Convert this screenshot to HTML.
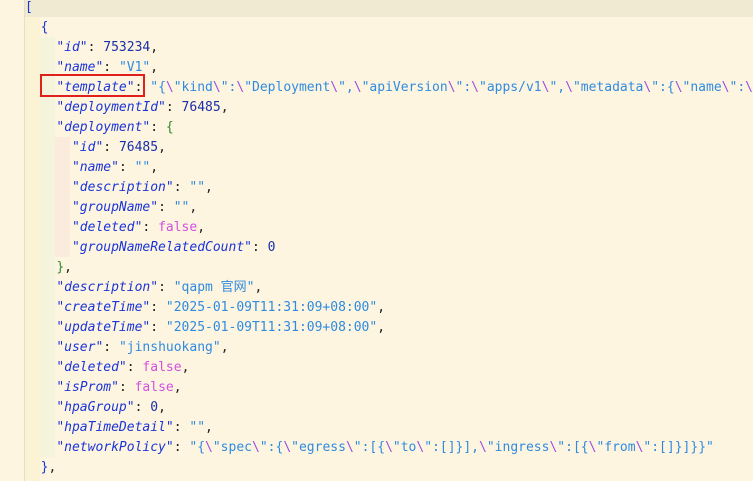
<!DOCTYPE html>
<html><head><meta charset="utf-8"><style>
html,body{margin:0;padding:0;width:753px;height:481px;overflow:hidden;background:#fdf5e0;}
.hl{position:absolute;left:24px;top:0;width:729px;height:17px;background:#f1ead2;}
.vl{position:absolute;left:24px;top:0;width:1px;height:481px;background:#e6dfc8;}
.g1{position:absolute;left:25px;top:17px;width:15px;height:464px;background:#fbf3d4;}
.g2{position:absolute;left:40px;top:37px;width:15px;height:420px;background:#f4f3db;}
.g3{position:absolute;left:55px;top:137px;width:15px;height:120px;background:#fbebdc;}
pre{position:absolute;left:25px;top:-2px;margin:0;font-family:"DejaVu Sans Mono","Liberation Mono","Noto Sans CJK SC",monospace;font-size:13px;line-height:20px;color:#222;white-space:pre;}
.k{color:#1c35d8;font-style:italic}
.p{color:#1c35d8}
.n{color:#1a2fa8}
.s{color:#2f8be0}
.e{color:#9a4fe0}
.f{color:#d34fe0}
.b{color:#2e8a2e}
.box{position:absolute;left:40px;top:74px;width:105px;height:23px;border:2px solid #e0201a;box-sizing:border-box;}
</style></head><body>
<div class="hl"></div><div class="vl"></div><div class="g1"></div><div class="g2"></div><div class="g3"></div>
<pre><span class="p">[</span>
  <span class="p">{</span>
    <span class="k">"id"</span>: <span class="n">753234</span>,
    <span class="k">"name"</span>: <span class="s">"V1"</span>,
    <span class="k">"template"</span>: <span class="s">"{<span class="e">\</span>"kind<span class="e">\</span>":<span class="e">\</span>"Deployment<span class="e">\</span>",<span class="e">\</span>"apiVersion<span class="e">\</span>":<span class="e">\</span>"apps/v1<span class="e">\</span>",<span class="e">\</span>"metadata<span class="e">\</span>":{<span class="e">\</span>"name<span class="e">\</span>":<span class="e">\</span></span>
    <span class="k">"deploymentId"</span>: <span class="n">76485</span>,
    <span class="k">"deployment"</span>: <span class="b">{</span>
      <span class="k">"id"</span>: <span class="n">76485</span>,
      <span class="k">"name"</span>: <span class="s">""</span>,
      <span class="k">"description"</span>: <span class="s">""</span>,
      <span class="k">"groupName"</span>: <span class="s">""</span>,
      <span class="k">"deleted"</span>: <span class="f">false</span>,
      <span class="k">"groupNameRelatedCount"</span>: <span class="n">0</span>
    <span class="b">}</span>,
    <span class="k">"description"</span>: <span class="s">"qapm 官网"</span>,
    <span class="k">"createTime"</span>: <span class="s">"2025-01-09T11:31:09+08:00"</span>,
    <span class="k">"updateTime"</span>: <span class="s">"2025-01-09T11:31:09+08:00"</span>,
    <span class="k">"user"</span>: <span class="s">"jinshuokang"</span>,
    <span class="k">"deleted"</span>: <span class="f">false</span>,
    <span class="k">"isProm"</span>: <span class="f">false</span>,
    <span class="k">"hpaGroup"</span>: <span class="n">0</span>,
    <span class="k">"hpaTimeDetail"</span>: <span class="s">""</span>,
    <span class="k">"networkPolicy"</span>: <span class="s">"{<span class="e">\</span>"spec<span class="e">\</span>":{<span class="e">\</span>"egress<span class="e">\</span>":[{<span class="e">\</span>"to<span class="e">\</span>":[]}],<span class="e">\</span>"ingress<span class="e">\</span>":[{<span class="e">\</span>"from<span class="e">\</span>":[]}]}}"</span>
  <span class="p">}</span>,</pre>
<div class="box"></div>
</body></html>
